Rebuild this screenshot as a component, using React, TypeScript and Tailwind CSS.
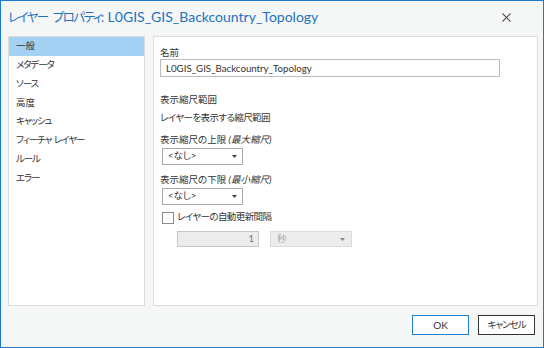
import React from "react";

const jp = "font-['Lato','Noto_Sans_CJK_JP',sans-serif] [font-feature-settings:'palt']";

function Arrow({ color = "#444" }: { color?: string }) {
  return (
    <svg width="5" height="3" viewBox="0 0 5 3">
      <path d="M0 0h5L2.5 3z" fill={color} />
    </svg>
  );
}

export default function App() {
  const items: [string, boolean][] = [
    ["一般", false],
    ["メタデータ", true],
    ["ソース", true],
    ["高度", false],
    ["キャッシュ", true],
    ["フィーチャ\u00a0\u00a0レイヤー", true],
    ["ルール", true],
    ["エラー", true],
  ];
  return (
    <div className={`w-[544px] h-[348px] border border-[#1b7ac9] bg-[#f5f6f6] flex flex-col text-[#333] ${jp}`}>
      <div className="h-[35px] flex items-center pl-[7px] pr-[32px] justify-between">
        <span className="text-[#1e73be] leading-none -mt-[3px] whitespace-nowrap flex items-baseline">
          <span className="text-[12.5px] tracking-[-1.5px]">レイヤー</span>
          <span className="inline-block w-[5px]" />
          <span className="text-[12.5px] tracking-[-1.5px]">プロパティ:</span>
          <span className="inline-block w-[5px]" />
          <span className="text-[14px]">L0GIS_GIS_Backcountry_Topology</span>
        </span>
        <svg width="9" height="9" viewBox="0 0 9 9" className="-mt-[3px]">
          <path d="M0.5 0.5L8.5 8.5M8.5 0.5L0.5 8.5" stroke="#555" strokeWidth="1.1" />
        </svg>
      </div>
      <div className="flex pl-[7px] gap-[8px] h-[270px]">
        <div className="w-[137px] h-full bg-white border border-[#dcdcdc] flex flex-col">
          {items.map(([t, kana], i) => (
            <div
              key={t}
              className={`h-[18.75px] flex items-center pl-[7px] text-[9.5px] ${kana ? "tracking-[-1.1px]" : ""} ${i === 0 ? "bg-[#a4d2f4]" : ""}`}
            >
              {t}
            </div>
          ))}
        </div>
        <div className="w-[385px] h-full bg-white border border-[#dcdcdc] flex flex-col pl-[6px] text-[9.5px]">
          <div className="mt-[9px] h-[13px] leading-[13px]">名前</div>
          <div className="w-[340px] h-[18px] border border-[#bcbcbc] flex items-center pl-[5px] text-[9.7px]">
            L0GIS_GIS_Backcountry_Topology
          </div>
          <div className="mt-[16px] h-[13px] leading-[13px]">表示縮尺範囲</div>
          <div className="mt-[5px] h-[13px] leading-[13px] tracking-[-0.6px]">レイヤーを表示する縮尺範囲</div>
          <div className="mt-[9px] h-[13px] leading-[13px]">
            表示縮尺の上限 <span className="italic">(最大縮尺)</span>
          </div>
          <div className="mt-[2px] ml-[2px] w-[81px] h-[17px] border border-[#aaa] bg-white flex items-center justify-between pl-[5px] pr-[5px]">
            <span>&lt;なし&gt;</span>
            <Arrow />
          </div>
          <div className="mt-[8px] h-[13px] leading-[13px]">
            表示縮尺の下限 <span className="italic">(最小縮尺)</span>
          </div>
          <div className="mt-[2px] ml-[2px] w-[81px] h-[17px] border border-[#aaa] bg-white flex items-center justify-between pl-[5px] pr-[5px]">
            <span>&lt;なし&gt;</span>
            <Arrow />
          </div>
          <div className="mt-[6px] ml-[2px] flex items-center h-[13px]">
            <div className="w-[12px] h-[12px] border border-[#888] bg-white" />
            <span className="ml-[3px] tracking-[-0.6px]">レイヤーの自動更新間隔</span>
          </div>
          <div className="mt-[7px] ml-[17px] flex items-center gap-[11px]">
            <div className="w-[82px] h-[16px] border border-[#c6c6c6] bg-[#ececec] flex items-center justify-end pr-[4px] text-[#777]">
              1
            </div>
            <div className="w-[82px] h-[16px] border border-[#dcdcdc] bg-[#ececec] flex items-center justify-between pl-[6px] pr-[6px] text-[#aaa]">
              <span>秒</span>
              <Arrow color="#888" />
            </div>
          </div>
        </div>
      </div>
      <div className="flex justify-end gap-[9px] pr-[8px] mt-[9px]">
        <button className="w-[57px] h-[20px] border border-[#1e7fd6] bg-white text-[10px] text-[#333] flex items-center justify-center">
          OK
        </button>
        <button className="w-[57px] h-[20px] border border-[#333] bg-white text-[9.5px] tracking-[-1px] text-[#333] flex items-center justify-center">
          キャンセル
        </button>
      </div>
    </div>
  );
}
